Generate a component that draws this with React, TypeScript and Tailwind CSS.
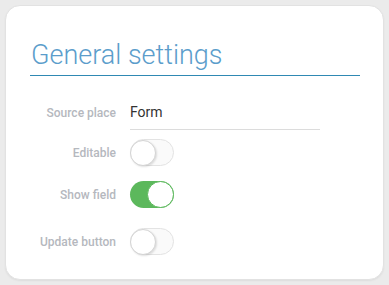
import React from 'react';

const Toggle: React.FC<{ on?: boolean }> = ({ on }) =>
  on ? (
    <div className="w-[44px] h-[27px] rounded-full bg-[#5cb85c] flex items-center justify-end">
      <div className="w-[27px] h-[27px] rounded-full bg-white border border-[#5cb85c]" />
    </div>
  ) : (
    <div className="w-[44px] h-[27px] rounded-full bg-[#fafafa] border border-[#e3e3e3] flex items-center">
      <div className="w-[26px] h-[26px] -ml-px rounded-full bg-white border border-[#d4d4d4] shadow-[1px_1px_2px_rgba(0,0,0,0.12)]" />
    </div>
  );

const Row: React.FC<{ label: string; className?: string; children: React.ReactNode }> = ({ label, className, children }) => (
  <div className={`flex items-center ${className ?? ''}`}>
    <div className="w-[86px] text-right text-[12px] font-medium text-[#b5b8be] whitespace-nowrap">{label}</div>
    <div className="ml-[14px]">{children}</div>
  </div>
);

export default function App() {
  return (
    <div className="w-[389px] h-[285px] bg-[#ebebeb] p-[5px]" style={{ fontFamily: 'Roboto, "Noto Sans", sans-serif' }}>
      <div className="h-[275px] bg-white rounded-[15px] border border-[#e2e2e2] shadow-[0_1px_2px_rgba(0,0,0,0.06)] pt-[33px] px-[24px]">
        <div className="border-b border-[#2f89b3] pb-[4px] w-[330px]">
          <h1 className="text-[27px] leading-[32px] font-light text-[#5b9dcb] pl-[1px]">General settings</h1>
        </div>

        <div className="mt-[19px]">
          <Row label="Source place">
            <div className="w-[190px] h-[35px] border-b border-[#dcdcdc] flex items-center text-[14px] text-[#333]">Form</div>
          </Row>
          <Row label="Editable" className="mt-[9px]">
            <Toggle />
          </Row>
          <Row label="Show field" className="mt-[15px]">
            <Toggle on />
          </Row>
          <Row label="Update button" className="mt-[20px]">
            <Toggle />
          </Row>
        </div>
      </div>
    </div>
  );
}
